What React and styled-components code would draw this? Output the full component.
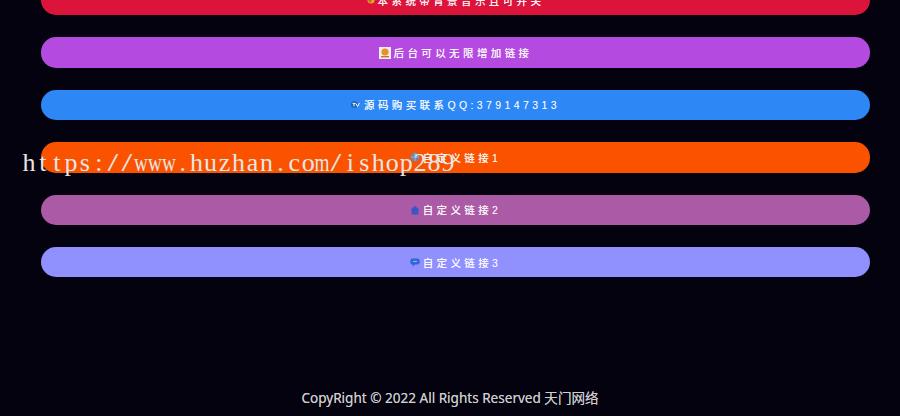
import styled, { createGlobalStyle } from "styled-components";

const GlobalStyle = createGlobalStyle`
  html, body {
    margin: 0;
    padding: 0;
    height: 100%;
    overflow: hidden;
    background: #05020f;
  }
`;

const Page = styled.div`
  position: relative;
  height: 416px;
  overflow: hidden;
  display: flex;
  flex-direction: column;
  background: #05020f;
  font-family: "Liberation Sans", "Noto Sans CJK SC", sans-serif;
`;

// the page is scrolled a bit, so the first button is cut by the top edge
const LinkList = styled.div`
  display: flex;
  flex-direction: column;
  gap: 22px;
  margin-top: -15px;
  padding: 0 30px 0 41px;
`;

const LinkButton = styled.a`
  display: flex;
  align-items: center;
  justify-content: center;
  gap: 3px;
  height: 30.4px;
  border-radius: 15px;
  background: ${(p) => p.$bg};
  color: rgba(255, 255, 255, 0.8);
  font-size: 10.5px;
  font-weight: 500;
  letter-spacing: 3.4px;
  text-shadow: 0 0 0.6px rgba(255, 255, 255, 0.7);
  white-space: nowrap;
`;

const Icon = styled.svg`
  flex: none;
  display: block;
`;

const Footer = styled.footer`
  margin-top: auto;
  padding-bottom: 8px;
  text-align: center;
  color: #cfcfcf;
  font-family: "Noto Sans", "Noto Sans CJK SC", sans-serif;
  font-size: 13.55px;
  line-height: 20px;
  text-shadow: 0 0 0.5px rgba(255, 255, 255, 0.6);
`;

const Watermark = styled.div`
  position: absolute;
  left: 22px;
  top: 149px;
  display: flex;
  color: #e6e6e6;
  font-family: "Liberation Serif", serif;
  font-size: 26px;
  line-height: 28px;
  white-space: nowrap;
`;

const Cell = styled.span`
  flex: none;
  display: flex;
  justify-content: center;
  width: 13.97px;
  transform: scaleX(${(p) => p.$scale});
`;

const cellScale = { w: 0.74, m: 0.74, "/": 1.5 };

const Coin = () => (
  <Icon width="8" height="8" viewBox="0 0 8 8">
    <circle cx="4" cy="4" r="3.6" fill="#e0a830" />
    <circle cx="3" cy="5" r="1.6" fill="#c86a20" />
  </Icon>
);

const Badge = () => (
  <Icon width="12" height="12" viewBox="0 0 12 12">
    <rect width="12" height="12" fill="#f2eee8" />
    <circle cx="6" cy="5" r="3.6" fill="#e8902a" />
    <rect x="2" y="9" width="8" height="1.4" fill="#c8702a" />
  </Icon>
);

const Tv = () => (
  <Icon width="10" height="9" viewBox="0 0 10 9">
    <circle cx="3.4" cy="4.6" r="3.4" fill="#1d5fb0" />
    <path d="M1.6 3.4h3M3 3.4v3M5 3.6l1.5 3 2-3.6" fill="none" stroke="#fff" strokeWidth="1" />
  </Icon>
);

const Globe = () => (
  <Icon width="10" height="10" viewBox="0 0 10 10">
    <circle cx="5" cy="5" r="4.5" fill="#6f86a8" />
    <path d="M1 5h8M5 1v8" stroke="#a9b8cc" strokeWidth="0.8" />
  </Icon>
);

const Home = () => (
  <Icon width="10" height="10" viewBox="0 0 10 10">
    <path d="M5 .8 9.6 5H8.4v4.4H1.6V5H.4z" fill="#3a56c4" />
  </Icon>
);

const Bubble = () => (
  <Icon width="10" height="9" viewBox="0 0 10 9">
    <path d="M2.5.6h5A2.2 2.2 0 0 1 9.7 2.8v1.4a2.2 2.2 0 0 1-2.2 2.2H5L2.6 8.4V6.4A2.2 2.2 0 0 1 .3 4.2V2.8A2.2 2.2 0 0 1 2.5.6z" fill="#2f66d8" />
    <path d="M3 3.4h4" stroke="#bcd0f5" strokeWidth="0.8" />
  </Icon>
);

const links = [
  { bg: "#dc143c", icon: <Coin />, text: "本系统带背景音乐且可开关" },
  { bg: "#b44ae0", icon: <Badge />, text: "后台可以无限增加链接" },
  { bg: "#2d87f5", icon: <Tv />, text: "源码购买联系QQ:379147313" },
  { bg: "#fb5200", icon: <Globe />, text: "自定义链接1" },
  { bg: "#ab5aa5", icon: <Home />, text: "自定义链接2" },
  { bg: "#9090ff", icon: <Bubble />, text: "自定义链接3" },
];

const watermark = "https://www.huzhan.com/ishop289";

export default function App() {
  return (
    <Page>
      <GlobalStyle />
      <LinkList>
        {links.map((link) => (
          <LinkButton key={link.text} $bg={link.bg}>
            {link.icon}
            <span>{link.text}</span>
          </LinkButton>
        ))}
      </LinkList>
      <Footer>CopyRight © 2022 All Rights Reserved 天门网络</Footer>
      <Watermark>
        {[...watermark].map((ch, i) => (
          <Cell key={i} $scale={cellScale[ch] || 1}>
            {ch}
          </Cell>
        ))}
      </Watermark>
    </Page>
  );
}
